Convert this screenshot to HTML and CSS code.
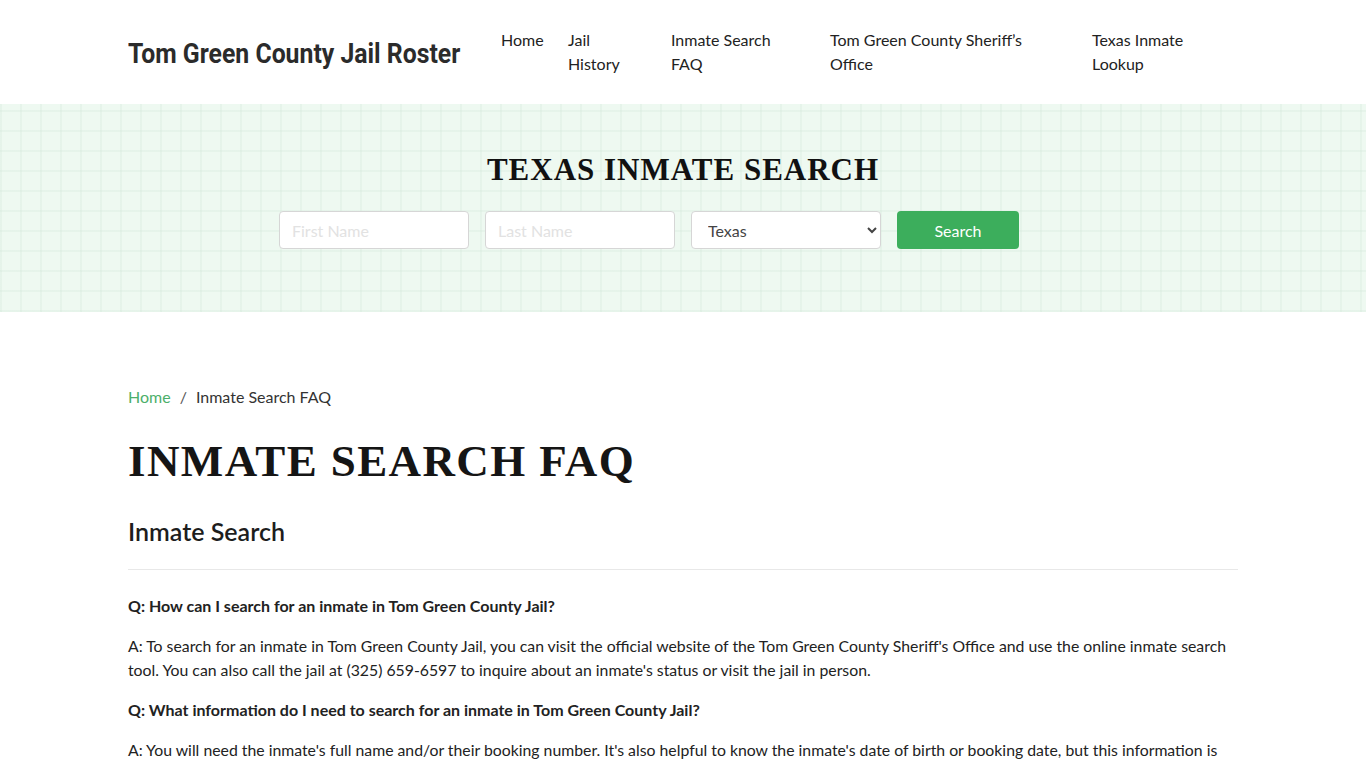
FILE: index.html
```html
<!DOCTYPE html>
<html lang="en">

<head>
    <meta charset="UTF-8">
    <meta name="viewport" content="width=device-width, initial-scale=1.0">
    <title>Inmate Search FAQ - Tom Green County Jail Roster</title>
    <link rel="stylesheet" href="styles.css">
</head>

<body>
    <header class="site-header">
        <div class="container header-row">
            <a class="brand" href="#"><span class="brand-text">Tom Green County Jail Roster</span></a>
            <ul class="nav">
                <li><a href="#">Home</a></li>
                <li><a href="#">Jail<br>History</a></li>
                <li><a href="#">Inmate Search<br>FAQ</a></li>
                <li><a href="#">Tom Green County Sheriff’s<br>Office</a></li>
                <li><a href="#">Texas Inmate<br>Lookup</a></li>
            </ul>
        </div>
    </header>

    <section class="hero">
        <h2 class="hero-title">TEXAS INMATE SEARCH</h2>
        <form class="search-form">
            <input class="field" type="text" placeholder="First Name">
            <input class="field" type="text" placeholder="Last Name">
            <select class="field select">
                <option>Texas</option>
            </select>
            <div><button class="btn" type="button">Search</button></div>
        </form>
    </section>

    <main class="container content">
        <nav class="crumbs">
            <a href="#">Home</a>
            <span class="sep">/</span>
            <span>Inmate Search FAQ</span>
        </nav>

        <h1 class="page-title">INMATE SEARCH FAQ</h1>

        <h3 class="section-title">Inmate Search</h3>
        <hr class="rule">

        <p class="q">Q: How can I search for an inmate in Tom Green County Jail?</p>
        <p>A: To search for an inmate in Tom Green County Jail, you can visit the official website of the Tom Green County Sheriff's Office and use the online inmate search tool. You can also call the jail at (325) 659-6597 to inquire about an inmate's status or visit the jail in person.</p>

        <p class="q">Q: What information do I need to search for an inmate in Tom Green County Jail?</p>
        <p>A: You will need the inmate's full name and/or their booking number. It's also helpful to know the inmate's date of birth or booking date, but this information is not always required to find an inmate in the jail roster.</p>
    </main>
</body>

</html>
```

FILE: styles.css
```css
body {
    margin: 0;
    font-family: Lato, "Open Sans", sans-serif;
    font-size: 16px;
    line-height: 24px;
    color: #222;
    background: #fff;
}

a {
    text-decoration: none;
    color: inherit;
}

.container {
    width: 1110px;
    margin: 0 auto;
}

/* header */
.site-header {
    height: 104px;
}

.header-row {
    display: flex;
    align-items: flex-start;
    padding-top: 28px;
}

.brand {
    width: 373px;
    flex: none;
    white-space: nowrap;
    line-height: 52px;
}

.brand-text {
    display: inline-block;
    font-family: Roboto, sans-serif;
    font-weight: 700;
    font-size: 28px;
    color: #2b2b2b;
    transform: scaleX(0.885);
    transform-origin: left center;
}

.nav {
    list-style: none;
    margin: 0;
    padding: 0;
    display: flex;
    color: #222;
}

.nav li:nth-child(1) { width: 67px; }
.nav li:nth-child(2) { width: 103px; }
.nav li:nth-child(3) { width: 159px; }
.nav li:nth-child(4) { width: 262px; }
.nav li:nth-child(5) { width: 146px; }

/* hero search */
.hero {
    height: 208px;
    box-sizing: border-box;
    padding-top: 48px;
    background-color: #eef9f1;
    background-image:
        repeating-linear-gradient(90deg, rgba(205, 228, 213, 0.25) 0 2px, transparent 2px 20px),
        repeating-linear-gradient(0deg, rgba(205, 228, 213, 0.25) 0 2px, transparent 2px 20px);
}

.hero-title {
    margin: 0;
    text-align: center;
    font-family: "Liberation Serif", serif;
    font-weight: 700;
    font-size: 31px;
    line-height: 36px;
    letter-spacing: 1px;
    color: #111;
}

.search-form {
    display: grid;
    grid-template-columns: repeat(4, 190px);
    gap: 16px;
    justify-content: center;
    margin-top: 23px;
}

.field {
    box-sizing: border-box;
    height: 38px;
    border: 1px solid #d6d6d6;
    border-radius: 4px;
    background: #fff;
    padding: 0 12px;
    font-family: Lato, sans-serif;
    font-size: 16px;
    color: #444;
}

.field::placeholder {
    color: #e2e2e2;
}

.btn {
    width: 122px;
    height: 38px;
    border: 0;
    border-radius: 4px;
    background: #3cae5c;
    color: #fff;
    font-family: Lato, sans-serif;
    font-size: 16px;
}

/* content */
.content {
    padding-top: 73px;
}

.crumbs {
    display: flex;
    font-size: 16px;
    color: #333;
}

.crumbs a {
    color: #4caf6a;
}

.crumbs .sep {
    margin: 0 9px 0 9px;
    color: #555;
}

.page-title {
    margin: 26px 0 0;
    font-family: "Liberation Serif", serif;
    font-weight: 700;
    font-size: 45px;
    line-height: 52px;
    letter-spacing: 1.4px;
    color: #151515;
}

.section-title {
    margin: 28px 0 0;
    font-weight: 600;
    font-size: 25px;
    line-height: 32px;
    color: #1d1d1d;
}

.rule {
    border: 0;
    border-top: 1px solid #e8e8e8;
    margin: 22px 0 0;
}

.content p {
    margin: 16px 0 0;
    font-size: 15.8px;
}

.content .q {
    font-size: 16px;
    font-weight: 700;
}

.content .rule + .q {
    margin-top: 24px;
}
```
